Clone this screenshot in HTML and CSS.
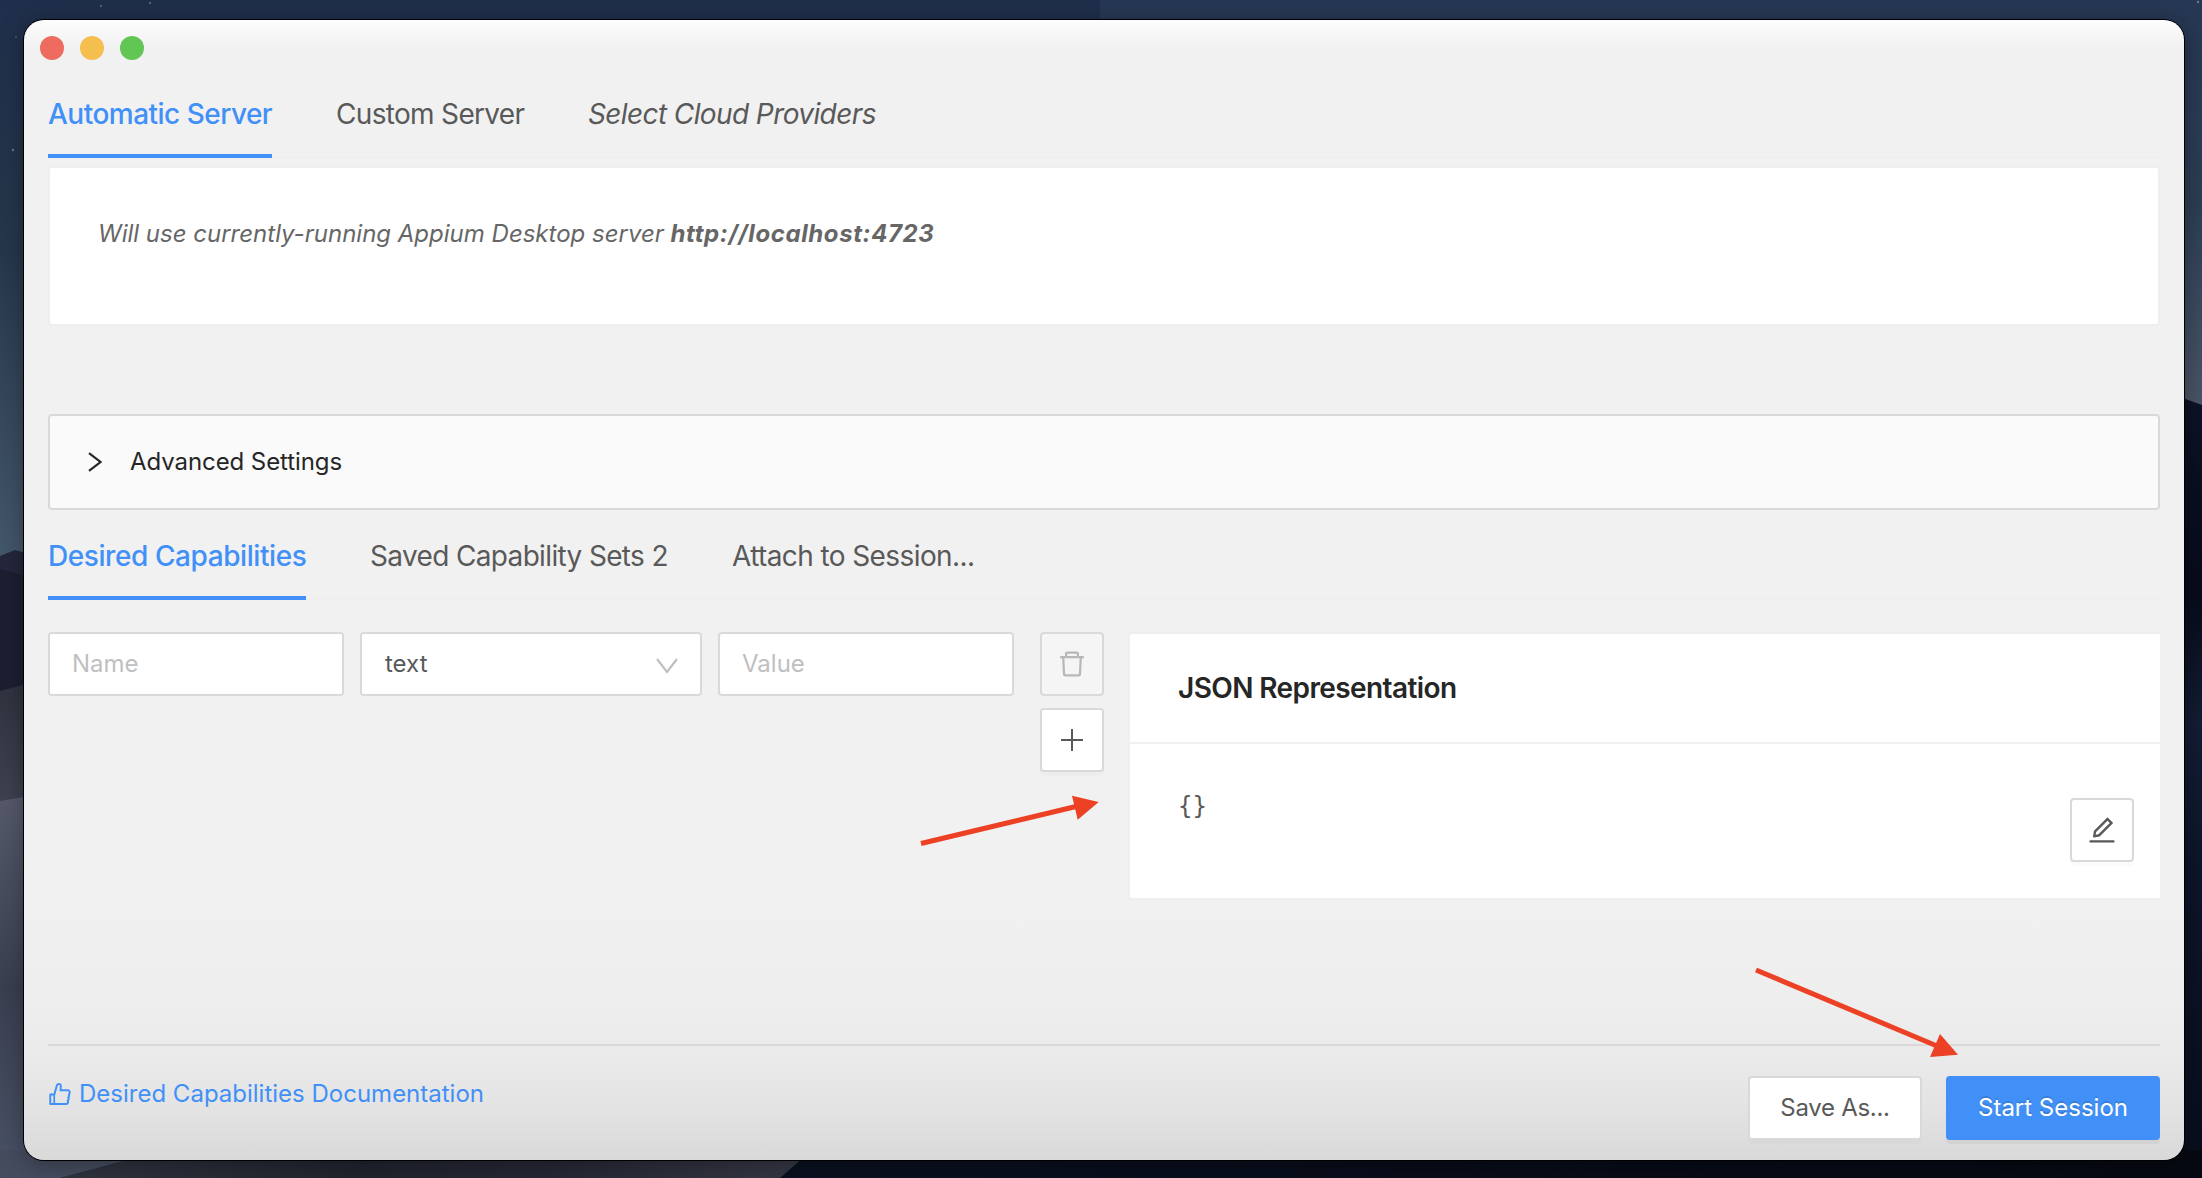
FILE: index.html
```html
<!DOCTYPE html>
<html lang="en">
<head>
<meta charset="utf-8">
<title>Appium</title>
<link rel="stylesheet" href="styles.css">
</head>
<body>
<svg class="wallpaper" viewBox="0 0 2202 1178" preserveAspectRatio="none">
  <defs>
    <linearGradient id="sky" x2="0" y2="1"><stop stop-color="#1f2e4b"/><stop offset=".45" stop-color="#26374a"/><stop offset="1" stop-color="#44586b"/></linearGradient>
    <linearGradient id="skyRight" x2="0" y2="1"><stop stop-color="#263754"/><stop offset=".5" stop-color="#2c3e54"/><stop offset="1" stop-color="#4a5567"/></linearGradient>
    <linearGradient id="dune" x2="0" y2="1"><stop stop-color="#30323f"/><stop offset="1" stop-color="#3f4251"/></linearGradient>
    <linearGradient id="sand" x2="0" y2="1"><stop stop-color="#565a6c"/><stop offset=".5" stop-color="#3a3f50"/><stop offset="1" stop-color="#495267"/></linearGradient>
    <linearGradient id="night" x2="0" y2="1"><stop stop-color="#0c1226"/><stop offset=".25" stop-color="#070b1b"/><stop offset=".42" stop-color="#131d33"/><stop offset=".6" stop-color="#0d152a"/><stop offset="1" stop-color="#080d1c"/></linearGradient>
    <linearGradient id="ridge"><stop stop-color="#30343f"/><stop offset=".4" stop-color="#20242e"/><stop offset=".65" stop-color="#252835"/><stop offset="1" stop-color="#363845"/></linearGradient>
    <linearGradient id="floor"><stop stop-color="#0a1020"/><stop offset="1" stop-color="#060912"/></linearGradient>
  </defs>
  <path fill="url(#sky)" d="M0 0h1100v560H0z"/>
  <path fill="url(#skyRight)" d="M1100 0h1102v406H1100z"/>
  <path fill="#25263c" d="M0 556 15 550 30 554V700H0z"/>
  <path fill="#1d1e31" d="M0 569 30 578V700H0z"/>
  <path fill="url(#dune)" d="M0 691 30 683V810H0z"/>
  <path fill="url(#sand)" d="M0 801 30 796V1178H0z"/>
  <path fill="url(#night)" d="M2180 397 2202 405V1178H2180z"/>
  <path fill="#454c5e" d="M0 1150H165L60 1178H0z"/>
  <path fill="url(#ridge)" d="M165 1150H812L780 1178H60z"/>
  <path fill="url(#floor)" d="M812 1150H2202V1178H780z"/>
  <g fill="#6b7b90"><circle cx="13" cy="150" r="1.200"/><circle cx="16" cy="37" r=".8"/><circle cx="101" cy="6" r=".9"/><circle cx="150" cy="3" r="1"/><circle cx="2198" cy="2" r="1.200"/></g>
</svg>

<main class="window">
  <div class="lights"><i class="light red"></i><i class="light yellow"></i><i class="light green"></i></div>

  <nav class="tabs server-tabs">
    <a class="tab active auto">Automatic Server</a>
    <a class="tab custom">Custom Server</a>
    <a class="tab cloud">Select Cloud Providers</a>
  </nav>

  <section class="server-card"><p class="note">Will use currently-running Appium Desktop server <b>http://localhost:4723</b></p></section>

  <section class="advanced">
    <svg class="chevron" viewBox="0 0 14 20"><path d="M1 1.200 12.500 10 1 18.800"/></svg>
    <span>Advanced Settings</span>
  </section>

  <nav class="tabs caps-tabs">
    <a class="tab active desired">Desired Capabilities</a>
    <a class="tab saved">Saved Capability Sets 2</a>
    <a class="tab attach">Attach to Session...</a>
  </nav>

  <section class="builder">
    <div class="field name"><span class="placeholder">Name</span></div>
    <div class="field type"><span>text</span><svg class="down" viewBox="0 0 22 16"><path d="M1 1 11 14 21 1"/></svg></div>
    <div class="field value"><span class="placeholder">Value</span></div>
    <div class="actions">
      <button class="btn square disabled"><svg viewBox="64 64 896 896"><path d="M360 184h-8c4.400 0 8-3.600 8-8v8h304v-8c0 4.400 3.600 8 8 8h-8v72h72v-80c0-35.300-28.700-64-64-64H352c-35.300 0-64 28.700-64 64v80h72v-72zm504 72H160c-17.700 0-32 14.300-32 32v32c0 4.400 3.600 8 8 8h60.400l24.700 523c1.600 34.100 29.800 61 63.900 61h454c34.200 0 62.300-26.800 63.900-61l24.700-523H888c4.400 0 8-3.600 8-8v-32c0-17.700-14.300-32-32-32zM731.300 840H292.700l-24.200-512h487l-24.200 512z"/></svg></button>
      <button class="btn square plus"><svg viewBox="0 0 22 22"><path d="M10 0h2v22h-2zM0 10h22v2H0z"/></svg></button>
    </div>
    <article class="json">
      <h2 class="json-title">JSON Representation</h2>
      <div class="json-body">
        <code>{}</code>
        <button class="btn square edit"><svg viewBox="64 64 896 896"><path d="M257.700 752c2 0 4-.2 6-.5L431.900 722c2-.4 3.900-1.300 5.300-2.800l423.900-423.900a9.960 9.960 0 0 0 0-14.100L694.900 114.900c-1.900-1.900-4.400-2.900-7.100-2.900s-5.200 1-7.100 2.900L256.800 538.800c-1.500 1.500-2.400 3.300-2.800 5.300l-29.500 168.200a33.500 33.500 0 0 0 9.400 29.800c6.600 6.400 14.900 9.900 23.800 9.900zm67.400-174.400L687.800 215l73.300 73.300-362.700 362.600-88.900 15.700 15.600-89zM880 836H144c-17.700 0-32 14.300-32 32v36c0 4.400 3.600 8 8 8h784c4.400 0 8-3.600 8-8v-36c0-17.700-14.300-32-32-32z"/></svg></button>
      </div>
    </article>
  </section>

  <footer class="footer">
    <a class="docs"><svg viewBox="64 64 896 896"><path d="M885.900 533.700c16.800-22.200 26.100-49.400 26.100-77.700 0-44.900-25.100-87.400-65.500-111.100a67.670 67.670 0 0 0-34.300-9.300H572.400l6-122.900c1.400-29.700-9.100-57.900-29.500-79.400A106.620 106.620 0 0 0 471 99.900c-52 0-98 35-111.800 85.100l-85.900 311H144c-17.700 0-32 14.300-32 32v364c0 17.700 14.300 32 32 32h601.300c9.200 0 18.200-1.800 26.500-5.400 47.600-20.300 78.300-66.800 78.300-118.400 0-12.600-1.800-25-5.400-37 16.800-22.200 26.100-49.400 26.100-77.700 0-12.600-1.800-25-5.400-37 16.800-22.200 26.100-49.400 26.100-77.700-.2-12.600-2-25.100-5.600-37.100zM184 852V568h81v284h-81zm636.400-353l-21.900 19 13.900 25.400a56.200 56.200 0 0 1 6.900 27.300c0 16.500-7.200 32.200-19.600 43l-21.900 19 13.900 25.400a56.200 56.200 0 0 1 6.900 27.300c0 16.500-7.200 32.200-19.600 43l-21.900 19 13.900 25.400a56.200 56.200 0 0 1 6.900 27.300c0 22.400-13.200 42.600-33.600 51.800H329V564.800l99.500-360.500a44.100 44.100 0 0 1 42.200-32.300c7.600 0 15.100 2.200 21.100 6.700 9.900 7.400 15.200 18.600 14.600 30.500l-9.600 198.400h314.400C829 418.500 840 436.900 840 456c0 16.500-7.200 32.100-19.600 43z"/></svg><span>Desired Capabilities Documentation</span></a>
    <div class="footer-buttons">
      <button class="btn save">Save As...</button>
      <button class="btn start">Start Session</button>
    </div>
  </footer>
</main>

<svg class="arrows" viewBox="0 0 2202 1178">
  <path class="shaft" d="M921 843.500 1076 806.500M1756 970 1937 1046"/>
  <path class="head" d="M1098.700 802 1072 795.700 1077.700 819.700ZM1958 1054.700 1940 1034 1930 1057Z"/>
</svg>
</body>
</html>
```
FILE: styles.css
```css
* { box-sizing: border-box; }
body {
  margin: 0;
  width: 2202px;
  height: 1178px;
  padding: 20px 18px 18px 24px;
  overflow: hidden;
  font: 24px/36px Inter, "Liberation Sans", sans-serif;
  color: #595959;
  background: #202d48;
}
.wallpaper { position: absolute; inset: 0; width: 2202px; height: 1178px; }
.window {
  position: relative;
  height: 1140px;
  padding: 16px 24px 20px;
  display: flex;
  flex-direction: column;
  border-radius: 20px;
  box-shadow: 0 0 0 1px #000, 0 4px 24px rgba(0,0,0,.35);
  background: linear-gradient(#fdfdfd 0, #f1f1f1 28px, #f1f1f1 860px, #eee 980px, #eaeaea 1040px, #e3e3e3 1090px, #d9d9d9 1140px);
}
.lights { display: flex; gap: 16px; margin-left: -8px; height: 24px; }
.light { width: 24px; height: 24px; border-radius: 50%; }
.red { background: #ed6b5f; }
.yellow { background: #f5bf4f; }
.green { background: #62c655; }

.tabs { display: flex; gap: 64px; font-size: 28px; line-height: 44px; border-bottom: 2px solid #efefef; }
.server-tabs { height: 98px; }
.caps-tabs { height: 90px; }
.tab { flex: none; display: flex; align-items: flex-end; padding-bottom: 18px; margin-bottom: -2px; border-bottom: 4px solid transparent; white-space: nowrap; }
.tab.active { color: #4190f7; border-color: #4190f7; font-weight: 500; }
.auto { width: 224px; letter-spacing: -.52px; }
.custom { width: 188px; letter-spacing: -.68px; }
.cloud { font-style: italic; letter-spacing: -.6px; }
.desired { width: 258px; letter-spacing: -.42px; }
.saved { width: 298px; letter-spacing: -.65px; }
.attach { letter-spacing: -.6px; }

.server-card { height: 160px; margin-top: 8px; padding: 48px 48px; background: #fff; border: 2px solid #efefef; border-radius: 4px; }
.note { margin: 0; font-style: italic; color: #666; white-space: pre; }
.note b { letter-spacing: .6px; }
.advanced { height: 96px; margin-top: 88px; padding: 0 38px; display: flex; align-items: center; gap: 28px; background: #fafafa; border: 2px solid #d9d9d9; border-radius: 4px; color: #262626; letter-spacing: -.08px; }
.chevron { width: 14px; height: 20px; fill: none; stroke: #262626; stroke-width: 2.2; }

.builder { display: flex; height: 268px; margin-top: 32px; }
.field { height: 64px; padding: 0 22px; display: flex; align-items: center; justify-content: space-between; background: #fff; border: 2px solid #d9d9d9; border-radius: 4px; }
.name, .value { width: 296px; }
.type { width: 342px; margin: 0 16px; padding-left: 23px; }
.placeholder { color: #bfbfbf; }
.down { width: 22px; height: 16px; fill: none; stroke: #bfbfbf; stroke-width: 2.2; margin-top: 3px; }
.actions { display: grid; gap: 12px; align-content: start; margin-left: 26px; }
.btn { height: 64px; padding: 0; display: flex; align-items: center; justify-content: center; font: inherit; color: #595959; white-space: nowrap; background: #fff; border: 2px solid #d9d9d9; border-radius: 4px; box-shadow: 0 4px 0 rgba(0,0,0,.016); }
.square { width: 64px; }
.square svg { width: 28px; height: 28px; fill: currentColor; }
.plus svg { width: 22px; height: 22px; }
.disabled { color: #b8b8b8; background: #f5f5f5; box-shadow: none; }
.json { flex: 1; margin-left: 24px; border: solid #efefef; border-width: 2px 0 2px 2px; background: #fff; border-radius: 4px 0 0 4px; }
.json-title { margin: 0; height: 110px; padding: 32px 48px; font-size: 28px; line-height: 44px; font-weight: 600; letter-spacing: -.6px; color: #262626; border-bottom: 2px solid #f0f0f0; }
.json-body { display: flex; justify-content: space-between; padding: 54px 26px 0 48px; }
.json code { margin-top: -10px; font: 24px/36px "DejaVu Sans Mono", monospace; }

.footer { margin-top: auto; height: 96px; display: flex; justify-content: space-between; border-top: 2px solid #d9d9d9; }
.docs { display: flex; gap: 7px; height: 36px; margin-top: 30px; align-items: center; color: #4190f7; white-space: nowrap; }
.docs svg { width: 24px; height: 24px; fill: currentColor; }
.footer-buttons { display: flex; gap: 24px; padding-top: 30px; }
.save { width: 174px; letter-spacing: -.3px; }
.start { width: 214px; color: #fff; background: #4190f7; border-color: #4190f7; text-shadow: 0 -2px 0 rgba(0,0,0,.12); box-shadow: 0 4px 0 rgba(0,0,0,.045); }

.arrows { position: absolute; inset: 0; width: 2202px; height: 1178px; pointer-events: none; }
.shaft { fill: none; stroke: #ec4125; stroke-width: 5; }
.head { fill: #ec4125; }
```
